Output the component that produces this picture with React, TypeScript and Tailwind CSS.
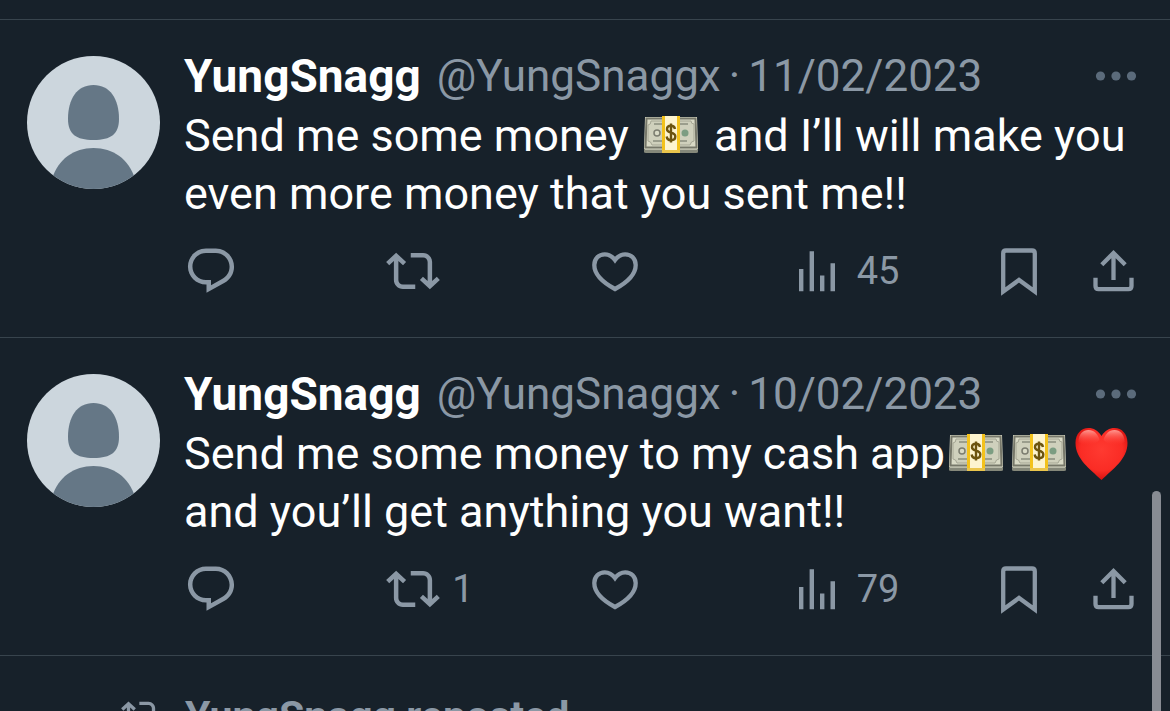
import type { ReactNode } from "react";

const REPOST_PATH =
  "M4.5 3.88l4.432 4.14-1.364 1.46L5.5 7.55V16c0 1.1.896 2 2 2H13v2H7.5c-2.209 0-4-1.79-4-4V7.55L1.432 9.48.068 8.02 4.5 3.88zM16.5 6H11V4h5.5c2.209 0 4 1.79 4 4v8.45l2.068-1.93 1.364 1.46-4.432 4.14-4.432-4.14 1.364-1.46 2.068 1.93V8c0-1.1-.896-2-2-2z";

function Avatar() {
  return (
    <svg viewBox="0 0 133 133" className="size-[133px] shrink-0 rounded-full" role="img" aria-label="YungSnagg">
      <rect width="133" height="133" fill="#ccd6dd" />
      <path
        d="M66.500 29C83 29 92 43 92 63C92 78 84 84 66.500 84C49 84 41 78 41 63C41 43 50 29 66.500 29Z"
        fill="#657786"
      />
      <path d="M25 123C31 103 47 92 66.500 92C86 92 102 103 108 123L108 133H25Z" fill="#657786" />
    </svg>
  );
}

function Money() {
  return (
    <svg viewBox="0 0 63 38" className="inline-block h-[38px] w-[63px] align-[-3px]" role="img" aria-label="Banknotes">
      <path d="M4 31H58V36Q58 37 56 37H6Q4 37 4 36Z" fill="#85887a" />
      <path d="M5 1H57L58 33H4Z" fill="#d9dac6" />
      <path d="M6.500 2.500H55.500L56.500 31.500H5.500Z" fill="none" stroke="#77786a" strokeWidth="2" />
      <path d="M11 5H51Q51 8 54 8V25Q51 25 50 29H12Q11 25 8 25V9Q11 9 11 5Z" fill="#cfd0bc" stroke="#a5a694" />
      <circle cx="17" cy="17" r="3" fill="#d9dac6" stroke="#7c7d70" strokeWidth="1.500" />
      <circle cx="45" cy="17" r="3.500" fill="#7c9d82" />
      <path d="M14 8H22M40 8H48M13 25H22M40 25H47" stroke="#8b8d7d" strokeWidth="1.500" />
      <path d="M5 33.500H57" stroke="#b9baa9" />
      <path d="M22 0H40V37H22Z" fill="#fdf4cf" />
      <path d="M22 0H25V37H22ZM37 0H40V37H37Z" fill="#f3c21c" />
      <path d="M22 34H40V37H22Z" fill="#eac54c" />
      <path
        d="M35 13C34.500 10.500 33 9.800 31 9.800C28.500 9.800 27 11.200 27 13.200C27 18 35.300 15.300 35.300 20.500C35.300 23 33.500 24.200 31 24.200C28.500 24.200 27 23 26.700 20.500M31 7.500V26.500"
        fill="none"
        stroke="#6c5410"
        strokeWidth="2.400"
      />
    </svg>
  );
}

function RedHeart() {
  return (
    <svg viewBox="0 0 63 54" className="inline-block h-[54px] w-[63px] align-[-12px]" role="img" aria-label="Red heart">
      <defs>
        <radialGradient id="heart-body" cx="0.5" cy="0.42" r="0.62">
          <stop offset="0" stopColor="#ff3a31" />
          <stop offset="0.65" stopColor="#fa2c25" />
          <stop offset="1" stopColor="#cf0b0a" />
        </radialGradient>
        <linearGradient id="heart-shine" x1="0" y1="0" x2="0" y2="1">
          <stop offset="0" stopColor="#ff9a92" />
          <stop offset="1" stopColor="#ff3a31" stopOpacity="0" />
        </linearGradient>
      </defs>
      <path
        d="M30.500 9C27 3.500 22.500 1 17.500 1C10 1 4.500 7 4.500 16C4.500 32 19 42 30.500 53C42 42 56.500 32 56.500 16C56.500 7 51 1 43.500 1C38.500 1 34 3.500 30.500 9Z"
        fill="url(#heart-body)"
      />
      <path d="M7.500 15C7.500 7 12 3 17.500 3C23 3 27 7 28.500 13C24 18 15 20 7.500 15Z" fill="url(#heart-shine)" />
      <path d="M53.500 15C53.500 7 49 3 43.500 3C38 3 34 7 32.500 13C37 18 46 20 53.500 15Z" fill="url(#heart-shine)" />
    </svg>
  );
}

function Action({ label, count, children }: { label: string; count?: string; children: ReactNode }) {
  return (
    <button type="button" aria-label={count ? `${label}, ${count}` : label} className="flex h-[54px] items-center justify-start">
      {children}
      {count && <span className="whitespace-nowrap text-[38px] leading-[54px]">{count}</span>}
    </button>
  );
}

function Actions({ reposts, views }: { reposts?: string; views: string }) {
  return (
    <div className="mt-[21px] grid grid-cols-[202fr_205fr_205fr_202fr_93fr_45fr] text-[#8b98a5]">
      <Action label="Reply">
        <svg viewBox="0 0 24 24" className="size-[54px] shrink-0" fill="currentColor" aria-hidden="true">
          <path d="M1.751 10c0-4.420 3.584-8 8.005-8h4.366c4.490 0 8.129 3.640 8.129 8.130 0 2.960-1.607 5.680-4.196 7.110l-8.054 4.460v-3.690h-.067c-4.490.1-8.183-3.510-8.183-8.010zm8.005-6c-3.317 0-6.005 2.690-6.005 6 0 3.370 2.770 6.080 6.138 6.010l.351-.01h1.761v2.300l5.087-2.810c1.951-1.080 3.163-3.130 3.163-5.360 0-3.390-2.744-6.130-6.129-6.130H9.756z" />
        </svg>
      </Action>
      <Action label="Repost" count={reposts}>
        <svg viewBox="0 0 24 24" className="mr-3 size-[54px] shrink-0" fill="currentColor" aria-hidden="true">
          <path d={REPOST_PATH} />
        </svg>
      </Action>
      <Action label="Like">
        <svg viewBox="0 0 48 54" className="h-[54px] w-12 shrink-0" fill="none" stroke="currentColor" strokeWidth="4.300" aria-hidden="true">
          <path d="M24 16.100C21.500 12.600 18 10.300 13.800 10.300C7.800 10.300 3.300 14.700 3.300 21C3.300 30 10 37.500 24 45C38 37.500 44.700 30 44.700 21C44.700 14.700 40.200 10.300 34.200 10.300C30 10.300 26.500 12.600 24 16.100Z" />
        </svg>
      </Action>
      <Action label="Views" count={views}>
        <svg viewBox="0 0 40 54" className="mr-5 h-[54px] w-10 shrink-0" fill="currentColor" aria-hidden="true">
          <path d="M2 25H6.400V47.300H2ZM12.600 7.200H17V47.300H12.600ZM23 31.500H27.400V47.300H23ZM33.500 19.200H38V47.300H33.500Z" />
        </svg>
      </Action>
      <Action label="Bookmark">
        <svg viewBox="0 0 40 54" className="h-[54px] w-10 shrink-0" fill="none" stroke="currentColor" strokeWidth="4.300" aria-hidden="true">
          <path d="M4.200 47.500V9.300Q4.200 6.500 7 6.500H33Q35.800 6.500 35.800 9.300V47.500L20 36Z" />
        </svg>
      </Action>
      <Action label="Share">
        <svg viewBox="0 0 44 54" className="h-[54px] w-11 shrink-0" fill="none" stroke="currentColor" strokeWidth="4.300" aria-hidden="true">
          <path d="M21.500 36V9M9.800 20.700L21.500 9L33.200 20.700M3.500 33.700V42Q3.500 45.100 6.600 45.100H36.400Q39.500 45.100 39.500 42V33.700" />
        </svg>
      </Action>
    </div>
  );
}

function Post({ date, reposts, views, children }: { date: string; reposts?: string; views: string; children: ReactNode }) {
  return (
    <article className="flex gap-6 border-t border-[#38444d] pt-9 pb-[39px] pl-[27px] pr-[33px]">
      <Avatar />
      <div className="min-w-0 flex-1">
        <header className="-mt-[10px] mb-px flex items-center leading-[60px]">
          <a href="#profile" className="mr-4 text-[46px] font-bold text-white">YungSnagg</a>
          <a href="#profile" className="text-[44px] text-[#8b98a5]">@YungSnaggx</a>
          <span className="mx-2 text-[44px] text-[#8b98a5]">·</span>
          <time className="text-[44px] text-[#8b98a5]">{date}</time>
          <button type="button" aria-label="More" className="ml-auto">
            <svg viewBox="0 0 44 12" className="h-3 w-11" fill="#5b6b7b" aria-hidden="true">
              <circle cx="7.500" cy="6" r="4.600" />
              <circle cx="23" cy="6" r="4.600" />
              <circle cx="38.500" cy="6" r="4.600" />
            </svg>
          </button>
        </header>
        <p className="whitespace-nowrap text-[45px] leading-[58px] text-white">{children}</p>
        <Actions reposts={reposts} views={views} />
      </div>
    </article>
  );
}

export default function App() {
  return (
    <main className="relative h-screen overflow-hidden bg-[#17212a] pt-[19px] font-['Roboto','Liberation_Sans',sans-serif]">
      <Post date="11/02/2023" views="45">
        Send me some money <Money /> and I’ll will make you
        <br />
        even more money that you sent me!!
      </Post>
      <Post date="10/02/2023" reposts="1" views="79">
        Send me some money to my cash app
        <Money />
        <Money />
        <RedHeart />
        <br />
        and you’ll get anything you want!!
      </Post>
      <div className="flex gap-6 border-t border-[#38444d] pl-[121px] pt-9 text-[#8b98a5]">
        <svg viewBox="0 0 24 24" className="mt-[3px] size-10 shrink-0" fill="currentColor" aria-hidden="true">
          <path d={REPOST_PATH} />
        </svg>
        <span className="text-[41px] font-bold leading-[48px]">YungSnagg reposted</span>
      </div>
      <div className="absolute bottom-0 right-[9px] top-[491px] w-[9px] rounded-t-full bg-[#888c93]" />
    </main>
  );
}
